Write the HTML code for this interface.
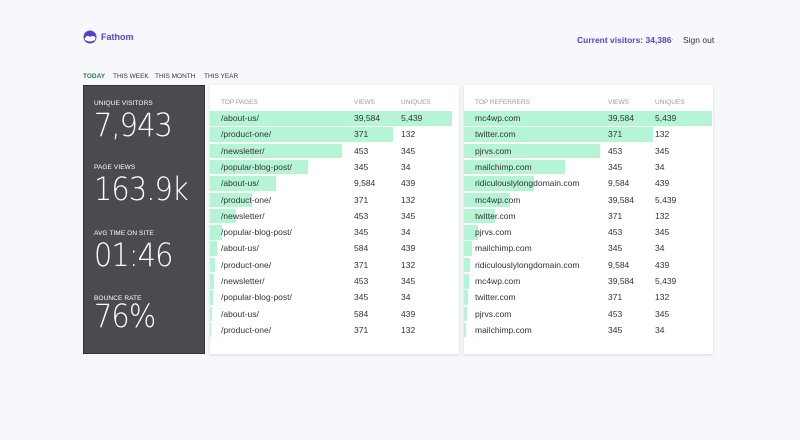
<!DOCTYPE html>
<html><head><style>
*{margin:0;padding:0;box-sizing:border-box}
body{width:800px;height:440px;background:#f7f8fb;font-family:"Liberation Sans",sans-serif;position:relative;overflow:hidden;color:#333}
.abs{position:absolute;white-space:nowrap}
.dark{position:absolute;left:83px;top:85px;width:122px;height:269px;background:#4a4b4f;border:1px solid #333;color:#fff}
.lbl{position:absolute;left:10px;font-size:6.5px;letter-spacing:0.1px}
.num{position:absolute;left:10px;font-size:32px;font-family:"DejaVu Sans ExtraLight","DejaVu Sans",sans-serif;font-weight:200;letter-spacing:-1px;transform:scaleX(0.9);transform-origin:left}
.card{position:absolute;top:85px;width:249px;height:269px;background:#fff;box-shadow:0 1px 3px rgba(0,0,0,.12)}
.hd{position:absolute;top:14px;font-size:6.5px;color:#999}
.row{position:absolute;left:0;height:14.5px;width:100%;font-size:8.5px;line-height:14.5px}
.bar{position:absolute;left:0;top:0;height:100%;background:#b5f5d6}
.row span{position:absolute}
</style></head><body>
<svg class="abs" style="left:83px;top:30px" width="14" height="14" viewBox="0 0 14 14"><circle cx="7" cy="7" r="6.5" fill="#5a3fd1"/><path d="M1.5 9 Q4 4 7 7 Q9 5 12.5 7 L12 10 Q7 13 2 10Z" fill="#fff"/></svg>
<div class="abs" style="left:101px;top:32px;font-size:9px;font-weight:bold;color:#5a3fd1">Fathom</div>
<div class="abs" style="left:577px;top:35px;font-size:8.5px;font-weight:bold;color:#5a3fd1">Current visitors: 34,386</div>
<div class="abs" style="left:671px;top:34px;font-size:8.5px;color:#aaa">·</div>
<div class="abs" style="left:683px;top:35px;font-size:8.5px;color:#333">Sign out</div>
<div class="abs" style="left:83px;top:73px;font-size:6.5px;font-weight:bold;color:#2a7a4f">TODAY</div>
<div class="abs" style="left:113px;top:73px;font-size:6.5px;color:#333">THIS WEEK</div>
<div class="abs" style="left:155px;top:73px;font-size:6.5px;color:#333">THIS MONTH</div>
<div class="abs" style="left:204px;top:73px;font-size:6.5px;color:#333">THIS YEAR</div>
<div class="dark">
<div class="lbl" style="top:14px">UNIQUE VISITORS</div><div class="num" style="top:20px">7,943</div>
<div class="lbl" style="top:78px">PAGE VIEWS</div><div class="num" style="top:84px">163.9k</div>
<div class="lbl" style="top:144px">AVG TIME ON SITE</div><div class="num" style="top:150px">01:46</div>
<div class="lbl" style="top:209px">BOUNCE RATE</div><div class="num" style="top:211px">76%</div>
</div>
<div class="card" style="left:210px" id="c1"><div class="hd" style="left:11px">TOP PAGES</div><div class="hd" style="left:144px">VIEWS</div><div class="hd" style="left:191px">UNIQUES</div></div>
<div class="card" style="left:464px" id="c2"><div class="hd" style="left:11px">TOP REFERRERS</div><div class="hd" style="left:144px">VIEWS</div><div class="hd" style="left:191px">UNIQUES</div></div>
<script>
var pages=["/about-us/","/product-one/","/newsletter/","/popular-blog-post/"];
var refs=["mc4wp.com","twitter.com","pjrvs.com","mailchimp.com","ridiculouslylongdomain.com"];
var v=[["39,584","5,439"],["371","132"],["453","345"],["345","34"],["9,584","439"],["371","132"],["453","345"],["345","34"],["584","439"],["371","132"],["453","345"],["345","34"],["584","439"],["371","132"]];
var v2=[["39,584","5,439"],["371","132"],["453","345"],["345","34"],["9,584","439"],["39,584","5,439"],["371","132"],["453","345"],["345","34"],["9,584","439"],["39,584","5,439"],["371","132"],["453","345"],["345","34"]];
var w=[242,183,132,98,66,42,26,12,7,5,4,3,2,1];
var w2=[248,189,136,101,70,46,31,14,8,6,5,4,3,2];
function fill(id,names,vals,ws){var c=document.getElementById(id),h="";for(var i=0;i<14;i++){h+='<div class="row" style="top:'+(26+i*16.3)+'px"><div class="bar" style="width:'+ws[i]+'px"></div><span style="left:11px">'+names[i%names.length]+'</span><span style="left:144px">'+vals[i][0]+'</span><span style="left:191px">'+vals[i][1]+'</span></div>'}c.innerHTML+=h}
fill("c1",pages,v,w);fill("c2",refs,v2,w2);
</script>
</body></html>
